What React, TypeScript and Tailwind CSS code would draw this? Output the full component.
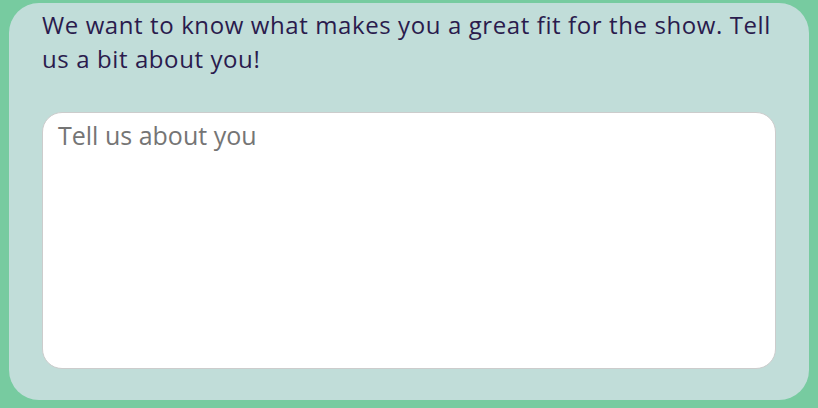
import React, { useState } from 'react';

const App: React.FC = () => {
    const [about, setAbout] = useState('');

    return (
        <div className="w-[818px] h-[408px] bg-[#77cba0] px-[9px] pt-[3px] pb-[8px]" style={{ fontFamily: '"Open Sans", Lato, sans-serif' }}>
            <div className="h-full bg-[#c1ddd9] rounded-[30px] px-[33px] pt-[5px] pb-[31px] flex flex-col">
                <p className="text-[24px] leading-[34px] tracking-[0.6px] text-[#2a1b4d]">
                    We want to know what makes you a great fit for the show. Tell us a bit about you!
                </p>
                <textarea
                    value={about}
                    onChange={(e) => setAbout(e.target.value)}
                    placeholder="Tell us about you"
                    className="mt-[36px] flex-1 w-full resize-none bg-white rounded-[20px] border border-[#cccccc] px-[15px] pt-[6px] pb-[8px] text-[25px] leading-[32px] text-[#333] placeholder:text-[#757575] focus:outline-none"
                />
            </div>
        </div>
    );
};

export default App;
